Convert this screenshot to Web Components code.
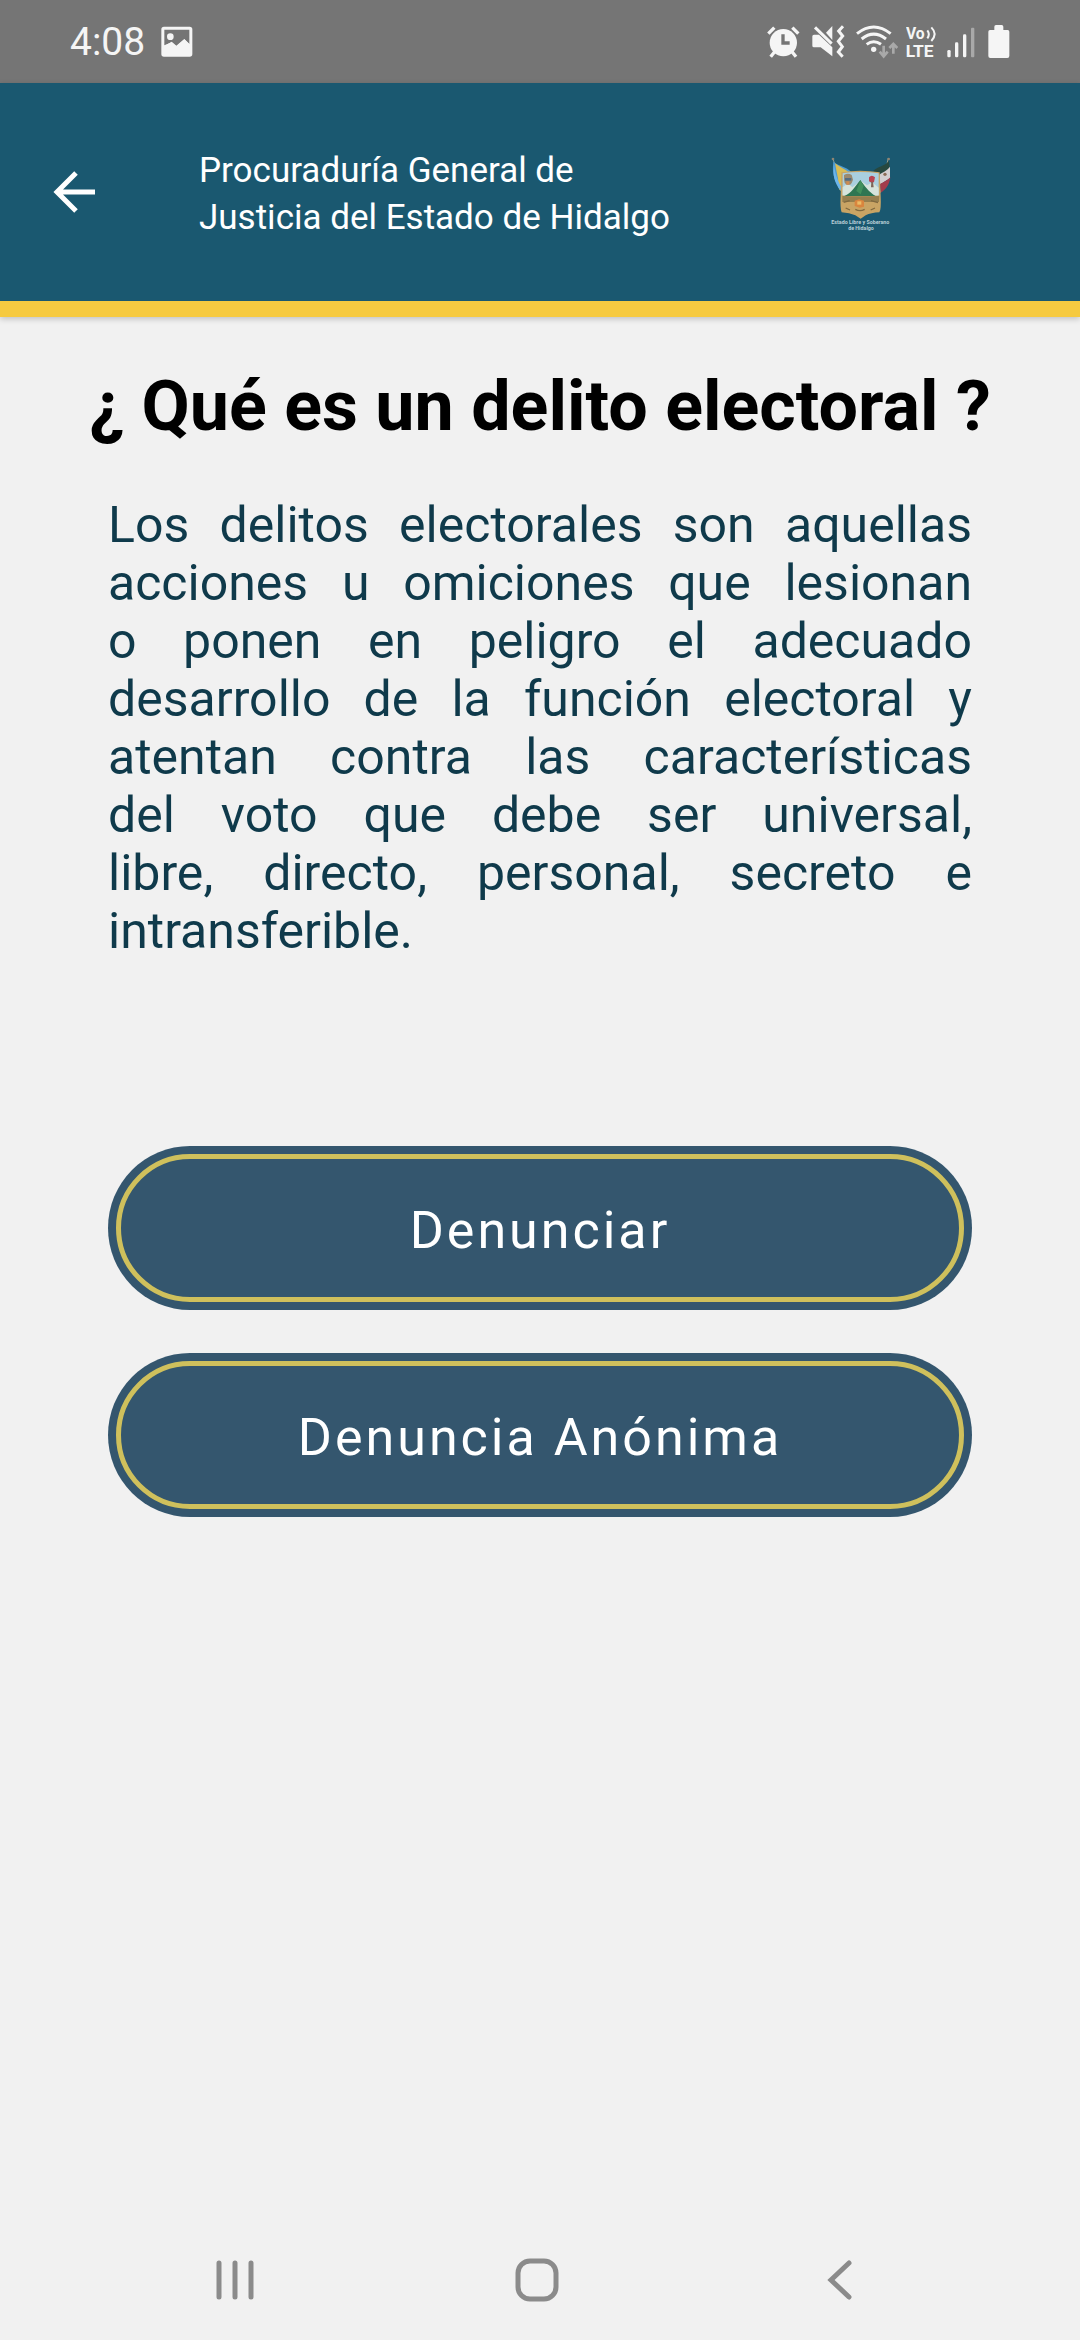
<!DOCTYPE html>
<html lang="es">
<head>
<meta charset="utf-8">
<meta name="viewport" content="width=device-width, initial-scale=1">
<title>Delitos electorales</title>
<style>
    body {
        margin: 0;
        background: #f1f1f1;
        font-family: Roboto, "Noto Sans", sans-serif;
    }
</style>
</head>
<body>
<app-screen>
    <status-bar slot="top" time="4:08"></status-bar>
    <app-header slot="top">Procuraduría General de Justicia del Estado de Hidalgo</app-header>
    <info-section>
        <span slot="title">¿ Qué es un delito electoral ?</span>
        Los delitos electorales son aquellas acciones u omiciones que lesionan o&nbsp;ponen en peligro el adecuado desarrollo de la función electoral y atentan contra las características del&nbsp;voto que debe ser universal, libre,&nbsp;directo, personal, secreto e intransferible.
    </info-section>
    <action-list>
        <pill-button>Denunciar</pill-button>
        <pill-button>Denuncia Anónima</pill-button>
    </action-list>
    <nav-bar slot="bottom"></nav-bar>
</app-screen>

<script>
function makeTemplate(html) {
    const template = document.createElement('template');
    template.innerHTML = html;
    return template;
}

const appScreen = makeTemplate(`
    <style>
        :host {
            display: flex;
            flex-direction: column;
            min-height: 100vh;
        }

        main {
            flex: 1;
            padding: 0 10%;
        }
    </style>
    <slot name="top"></slot>
    <main><slot></slot></main>
    <slot name="bottom"></slot>
`);

class AppScreen extends HTMLElement {
    constructor() {
        super();
        this.attachShadow({mode: 'open'});
        this.shadowRoot.appendChild(appScreen.content.cloneNode(true));
    }
}

const statusBar = makeTemplate(`
    <style>
        :host {
            display: flex;
            align-items: center;
            justify-content: space-between;
            height: 83px;
            padding: 0 70px;
            box-sizing: border-box;
            background: #757575;
            color: #f5f5f5;
        }

        div {
            display: flex;
            align-items: center;
            gap: 8px;
        }

        .left {
            gap: 16px;
        }

        time {
            font-size: 39px;
            line-height: 44px;
        }

        svg {
            display: block;
            fill: currentColor;
        }

        text {
            font-family: Roboto, sans-serif;
            font-weight: 700;
        }
    </style>
    <div class="left">
        <time></time>
        <svg width="32" height="32" viewBox="362 76 96 96" aria-hidden="true">
            <path fill-rule="evenodd" d="M371 78h77q8 0 8 8v74q0 8-8 8h-77q-8 0-8-8V86q0-8 8-8zM372 87v47l22-9 14 12 24-21 15 14V87z"/>
            <path d="M371 137l23-14 14 12 24-20 16 16v32h-77z"/>
            <circle cx="390" cy="108" r="10"/>
        </svg>
    </div>
    <div>
        <svg width="37" height="34" viewBox="53 75 111 102" aria-hidden="true">
            <circle cx="102" cy="128" r="41"/>
            <path d="M57 101l18-18M147 101l-18-18M76 155l-12 15M128 155l12 15" fill="none" stroke="currentColor" stroke-width="10"/>
            <path d="M101 103v26h20" fill="none" stroke="#757575" stroke-width="10"/>
        </svg>
        <svg width="36" height="34" viewBox="188 75 108 102" aria-hidden="true">
            <path d="M189 109q0-5 5-5h15l40 38v27l-35-27h-20q-5 0-5-5z"/>
            <path d="M230 98l19-20v42z"/>
            <path d="M197 82l50 49" stroke="currentColor" stroke-width="9"/>
            <path d="M281 79l-13 14 12 15-13 16 12 16-12 16 13 14" fill="none" stroke="currentColor" stroke-width="9"/>
        </svg>
        <svg width="42" height="34" viewBox="320 75 126 102" aria-hidden="true">
            <g fill="none" stroke="currentColor" stroke-width="9">
                <path d="M323 101q50-40 101 0M337 117q36-29 73 0M352 133q21-16 43 0"/>
            </g>
            <circle cx="373" cy="148" r="8"/>
            <path d="M403 137v32M391 155l12 14 12-14M432 161v-29M420 144l12-12 12 12" fill="none" stroke="#a9a9a9" stroke-width="8"/>
        </svg>
        <svg width="33" height="42" viewBox="470 63 99 126" role="img">
            <text x="470" y="118" font-size="47">Vo</text>
            <text x="469" y="172" font-size="52">LTE</text>
            <path d="M534 91q9 12 0 24M546 82q20 20 0 41" fill="none" stroke="currentColor" stroke-width="6"/>
        </svg>
        <svg width="33" height="34" viewBox="593 75 99 102" aria-hidden="true">
            <rect x="594" y="150" width="10" height="22" rx="4"/>
            <rect x="617" y="127" width="10" height="45" rx="4"/>
            <rect x="641" y="103" width="10" height="69" rx="4"/>
            <rect x="665" y="83" width="10" height="89" rx="3" fill="#a9a9a9"/>
        </svg>
        <svg width="22" height="34" viewBox="716 75 66 102" aria-hidden="true">
            <path d="M735 80q0-5 5-5h17q5 0 5 5v10h13q5 0 5 5v73q0 6-6 6h-51q-6 0-6-6V95q0-5 5-5h13z"/>
        </svg>
    </div>
`);

class StatusBar extends HTMLElement {
    constructor() {
        super();
        this.attachShadow({mode: 'open'});
        this.shadowRoot.appendChild(statusBar.content.cloneNode(true));
        this.shadowRoot.querySelector('time').textContent = this.getAttribute('time');
    }
}

const stateEmblem = makeTemplate(`
    <style>
        :host {
            display: block;
        }

        svg {
            display: block;
        }

        text {
            font-family: Roboto, sans-serif;
            font-weight: 700;
            font-size: 16px;
            fill: #b9cfd6;
            text-anchor: middle;
        }
    </style>
    <svg width="100" height="104" viewBox="0 0 300 312">
        <!-- flags -->
        <path d="M69 56L99 158" stroke="#8aa09b" stroke-width="3"/>
        <path d="M70 65c20 15 38 14 54 31l-24 60c-10-5-13-14-18-23-10-17-16-35-12-68z" fill="#4d9bd2"/>
        <path d="M75 70c14 12 29 16 43 28l-22 20-4 35c-11-9-5-29-9-42z" fill="#d8bd55"/>
        <path d="M72 74c4 27 8 41 22 67l-2 11C72 127 68 104 72 74z" fill="#6cb5ea"/>
        <path d="M235 54L211 158" stroke="#9a9b88" stroke-width="3"/>
        <path d="M237 63c-15 16-31 16-47 29l21 25 29-18z" fill="#27483f"/>
        <path d="M240 80c-10 14-22 15-32 24v30l32-19z" fill="#d2ced0"/>
        <path d="M241 112c-10 11-22 15-31 20l2 26c15-9 26-22 29-46z" fill="#a23c4c"/>
        <circle cx="225" cy="103" r="5" fill="#8b6c56"/>
        <circle cx="69" cy="57" r="4" fill="#8e8573"/>
        <circle cx="236" cy="57" r="4" fill="#8e8573"/>
        <!-- shield -->
        <path d="M94 97q56-10 115 0l3 71q2 42-4 49-25 1-41 9l-15 10-16-10q-17-8-41-9-5-12-3-49z" fill="#c9a464"/>
        <path d="M98 100q52-8 108 0v65H98z" fill="#a9cfdf"/>
        <path d="M98 142l16-12 13 12 25-20 19 14 16-9 19 16v24H98z" fill="#d6e3db"/>
        <path d="M103 168c22-9 31-27 48-48 12 17 25 36 46 48z" fill="#2e7652"/>
        <path d="M151 121l10 17-9 25-13-10z" fill="#41905c"/>
        <path d="M102 105q12-8 23 0l4 14q-5 15-10 15h-9q-8-5-8-15z" fill="#9b8a70"/>
        <path d="M105 114h19v8h-19z" fill="#536d82"/>
        <path d="M109 124h9v10h-9z" fill="#d08a4e"/>
        <path d="M177 112q8-9 18 0l-3 14-6 3-9-5z" fill="#b94451"/>
        <path d="M184 125h5l2 17h-8z" fill="#7c665a"/>
        <path d="M97 167q52 4 111 0l-1 19H97z" fill="#967f4e"/>
        <path d="M101 187l18-5M183 182l21 6M136 208q14 8 28 0M107 204l13 6M182 210l13-6" stroke="#80693f" stroke-width="4" fill="none"/>
        <path d="M134 182l13-4 15 4v18l-13 3-15-5z" fill="#d9853e"/>
        <path d="M142 184h12v10h-12z" fill="#ebbb65"/>
        <text x="151" y="252">Estado Libre y Soberano</text>
        <text x="153" y="270">de Hidalgo</text>
    </svg>
`);

class StateEmblem extends HTMLElement {
    constructor() {
        super();
        this.attachShadow({mode: 'open'});
        this.shadowRoot.appendChild(stateEmblem.content.cloneNode(true));
    }
}

const appHeader = makeTemplate(`
    <style>
        :host {
            display: flex;
            align-items: center;
            height: 234px;
            padding: 0 170px 0 40px;
            box-sizing: border-box;
            background: #1a5870;
            border-bottom: 16px solid #f6ca40;
            box-shadow: 0 2px 6px rgba(0, 0, 0, .2);
            color: #fff;
        }

        button {
            width: 68px;
            height: 68px;
            margin-right: 91px;
            padding: 0;
            border: 0;
            background: none;
            color: inherit;
        }

        svg {
            display: block;
            margin: auto;
        }

        .name {
            flex: 1;
            padding-top: 4px;
            font-size: 35px;
            line-height: 47px;
        }

        .name span {
            display: block;
            max-width: 490px;
        }
    </style>
    <button type="button" aria-label="Atrás">
        <svg width="44" height="44" viewBox="0 0 44 44" fill="none" stroke="currentColor" stroke-width="5">
            <path d="M43 22H5M24 3L5 22l19 19"/>
        </svg>
    </button>
    <div class="name"><span><slot></slot></span></div>
    <state-emblem></state-emblem>
`);

class AppHeader extends HTMLElement {
    constructor() {
        super();
        this.attachShadow({mode: 'open'});
        this.shadowRoot.appendChild(appHeader.content.cloneNode(true));
    }
}

const infoSection = makeTemplate(`
    <style>
        :host {
            display: block;
        }

        h1 {
            margin: 48px -50px 0;
            font-size: 70px;
            line-height: 82px;
            font-weight: 700;
            text-align: center;
            color: #000;
        }

        p {
            margin: 49px 0 0;
            font-size: 50px;
            line-height: 58px;
            text-align: justify;
            color: #0f3a4b;
        }
    </style>
    <h1><slot name="title"></slot></h1>
    <p><slot></slot></p>
`);

class InfoSection extends HTMLElement {
    constructor() {
        super();
        this.attachShadow({mode: 'open'});
        this.shadowRoot.appendChild(infoSection.content.cloneNode(true));
    }
}

const actionList = makeTemplate(`
    <style>
        :host {
            display: flex;
            flex-direction: column;
            gap: 43px;
            margin-top: 186px;
        }
    </style>
    <slot></slot>
`);

class ActionList extends HTMLElement {
    constructor() {
        super();
        this.attachShadow({mode: 'open'});
        this.shadowRoot.appendChild(actionList.content.cloneNode(true));
    }
}

const pillButton = makeTemplate(`
    <style>
        :host {
            display: block;
            padding: 8px;
            border-radius: 82px;
            background: #34566e;
        }

        button {
            display: block;
            width: 100%;
            height: 148px;
            padding: 6px 0 0;
            border: 5px solid #cfc05c;
            border-radius: 74px;
            background: none;
            color: #fff;
            font: inherit;
            font-size: 52px;
            line-height: 60px;
            letter-spacing: 3px;
        }
    </style>
    <button type="button"><slot></slot></button>
`);

class PillButton extends HTMLElement {
    constructor() {
        super();
        this.attachShadow({mode: 'open'});
        this.shadowRoot.appendChild(pillButton.content.cloneNode(true));
    }
}

const navBar = makeTemplate(`
    <style>
        :host {
            display: grid;
            grid-template-columns: repeat(3, 1fr);
            height: 120px;
            padding: 0 90px 0 84px;
        }

        button {
            padding: 0;
            border: 0;
            background: none;
            color: #8b8b8b;
        }

        svg {
            display: block;
            margin: auto;
            fill: none;
            stroke: currentColor;
            stroke-width: 5;
            stroke-linecap: round;
        }
    </style>
    <button type="button" aria-label="Recientes">
        <svg width="44" height="44" viewBox="0 0 44 44"><path d="M6 5v34M22 5v34M38 5v34"/></svg>
    </button>
    <button type="button" aria-label="Inicio">
        <svg width="44" height="44" viewBox="0 0 44 44"><rect x="3" y="3" width="38" height="38" rx="12"/></svg>
    </button>
    <button type="button" aria-label="Volver">
        <svg width="44" height="44" viewBox="0 0 44 44"><path d="M32 5L14 22l18 17"/></svg>
    </button>
`);

class NavBar extends HTMLElement {
    constructor() {
        super();
        this.attachShadow({mode: 'open'});
        this.shadowRoot.appendChild(navBar.content.cloneNode(true));
    }
}

window.customElements.define('state-emblem', StateEmblem);
window.customElements.define('status-bar', StatusBar);
window.customElements.define('app-header', AppHeader);
window.customElements.define('info-section', InfoSection);
window.customElements.define('action-list', ActionList);
window.customElements.define('pill-button', PillButton);
window.customElements.define('nav-bar', NavBar);
window.customElements.define('app-screen', AppScreen);
</script>
</body>
</html>
